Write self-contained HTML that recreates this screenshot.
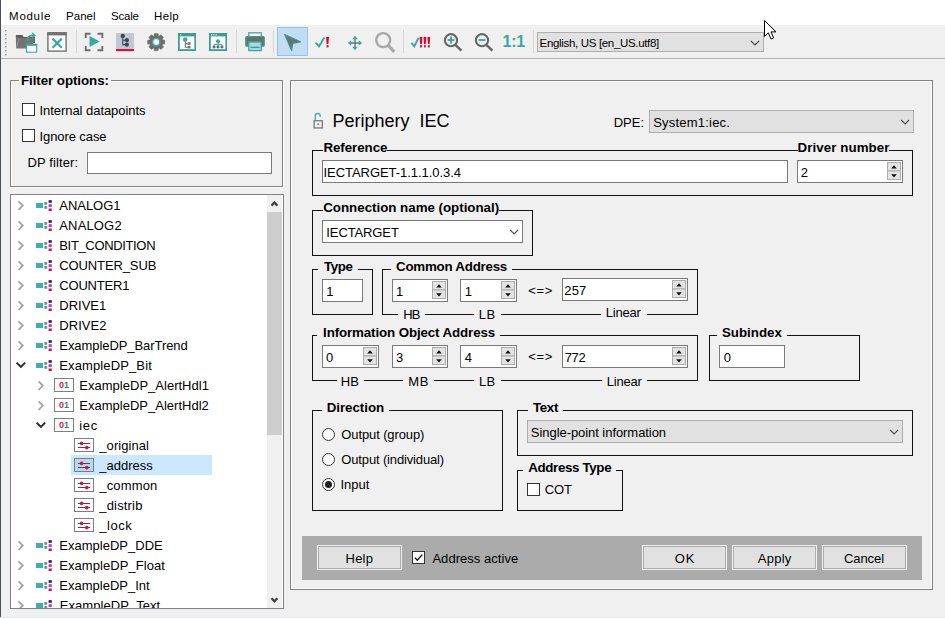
<!DOCTYPE html><html><head><meta charset="utf-8"><title>PARA</title><style>
*{box-sizing:border-box;margin:0;padding:0}
html,body{width:945px;height:618px;overflow:hidden;background:#f0f0f0}
body{position:relative;font-family:"Liberation Sans",Arial,sans-serif;font-size:13px;color:#000}
.a{position:absolute}
.t{position:absolute;white-space:nowrap;line-height:16px;height:16px}
.b{font-weight:bold}
.m{font-size:11.5px}
.gb{position:absolute;border:1px solid #111}
.gt{position:absolute;white-space:nowrap;line-height:16px;height:16px;font-weight:bold;font-size:13.33px;background:#f0f0f0}
.gl{position:absolute;white-space:nowrap;line-height:14px;height:14px;background:#f0f0f0}
.in{position:absolute;background:#fff;border:1px solid #7a7a7a}
.cb{position:absolute;width:13px;height:13px;background:#fff;border:1px solid #333}
.rb{position:absolute;width:13px;height:13px;background:#fff;border:1px solid #333;border-radius:50%}
.btn{position:absolute;background:#e1e1e1;border:1px solid #f0f0f0;box-shadow:inset 0 0 0 1px #adadad;text-align:center;line-height:23px;padding-top:1px}
.sb{position:absolute;width:14px;height:9px;background:#e9e9e9;border:1px solid #c4c4c4}
.row{position:absolute;white-space:nowrap;line-height:20px;height:20px;padding-top:1px}
</style></head><body><div class="a" style="left:0;top:0;width:945px;height:25px;background:#fff"></div><div id="t1" class="t m" style="left:9.10px;top:7.5px;letter-spacing:0.720px;">Module</div><div id="t2" class="t m" style="left:66.10px;top:7.5px;">Panel</div><div id="t3" class="t m" style="left:111.10px;top:7.5px;letter-spacing:-0.225px;">Scale</div><div id="t4" class="t m" style="left:154.10px;top:7.5px;letter-spacing:0.300px;">Help</div><div class="a" style="left:0;top:25px;width:945px;height:33px;background:#f0f0f0"></div><div class="a" style="left:0;top:58px;width:945px;height:1px;background:#b4b4b4"></div><svg class="a" style="left:5px;top:29.5px" width="3" height="28" viewBox="0 0 3 28"><rect x="0" y="0" width="1.5" height="1.5" fill="#9a9a9a"/><rect x="0" y="4" width="1.5" height="1.5" fill="#9a9a9a"/><rect x="0" y="8" width="1.5" height="1.5" fill="#9a9a9a"/><rect x="0" y="12" width="1.5" height="1.5" fill="#9a9a9a"/><rect x="0" y="16" width="1.5" height="1.5" fill="#9a9a9a"/><rect x="0" y="20" width="1.5" height="1.5" fill="#9a9a9a"/><rect x="0" y="24" width="1.5" height="1.5" fill="#9a9a9a"/></svg><svg class="a" style="left:14px;top:31px" width="26" height="24" viewBox="0 0 26 24"><path d="M1.8 4.1 H8.4 L9.6 6 H21 V12 H2.6 Z" fill="#5e5e5e"/><path d="M2.2 17.4 L1.8 5 L4.4 6.9 H21.2 L17.6 17.4 Z" fill="#747474"/><path d="M2.6 16.6 L4.9 7.6" stroke="#9a9a9a" stroke-width="0.7"/><path d="M13.8 10.2 V8.2 a3.6 3.6 0 0 1 3.6 -3.6 H19" fill="none" stroke="#3aa9a2" stroke-width="1.9"/><path d="M18.2 1.3 L22 4.5 L18.2 7.7 Z" fill="#3aa9a2"/><rect x="12.5" y="13.4" width="10.2" height="7.8" fill="#fff" stroke="#3aa9a2" stroke-width="1.1"/><rect x="12" y="12.9" width="11.2" height="2" fill="#3aa9a2"/></svg><svg class="a" style="left:47px;top:32px" width="20" height="20" viewBox="0 0 20 20"><rect x="0.9" y="0.9" width="18.2" height="18.2" fill="#fff" stroke="#727272" stroke-width="1.4"/><rect x="0.2" y="0.2" width="19.6" height="3.2" fill="#727272"/><path d="M5.6 6.6 L14.8 15.8 M14.8 6.6 L5.6 15.8" stroke="#3aa9a2" stroke-width="2.2"/></svg><div class="a" style="left:76px;top:30px;width:1px;height:23px;background:#d6d6d6"></div><svg class="a" style="left:84px;top:32px" width="20" height="20" viewBox="0 0 20 20"><path d="M1.7 6 V1.7 H6.5 M13.5 1.7 H18.3 V6 M18.3 14 V18.3 H13.5 M6.5 18.3 H1.7 V14" fill="none" stroke="#6e6e6e" stroke-width="1.9"/><path d="M5.5 4 L15.7 9.6 L5.5 15 Z" fill="#3aa9a2"/></svg><svg class="a" style="left:116px;top:33px" width="18" height="19" viewBox="0 0 18 19"><rect x="0" y="0" width="18" height="16" fill="#bfc9d3"/><rect x="0" y="16" width="18" height="2.2" fill="#d6104a"/><path d="M6.8 3 V11.6 H10.8 M6.8 7.2 H10.8" fill="none" stroke="#3d4756" stroke-width="1.1"/><circle cx="6.8" cy="2.9" r="2.2" fill="#3d4756"/><circle cx="10.9" cy="7.2" r="2.1" fill="#3d4756"/><circle cx="10.9" cy="11.7" r="2.1" fill="#3d4756"/></svg><svg class="a" style="left:146px;top:32px" width="20" height="20" viewBox="0 0 20 20"><g transform="translate(10.2,10.1) scale(0.93)"><path d="M-2.5 -6 L-1.9 -9.2 H1.9 L2.5 -6 Z" fill="#6e6e6e" stroke="#6e6e6e" stroke-width="0.6" stroke-linejoin="round" transform="rotate(0)"/><path d="M-2.5 -6 L-1.9 -9.2 H1.9 L2.5 -6 Z" fill="#6e6e6e" stroke="#6e6e6e" stroke-width="0.6" stroke-linejoin="round" transform="rotate(45)"/><path d="M-2.5 -6 L-1.9 -9.2 H1.9 L2.5 -6 Z" fill="#6e6e6e" stroke="#6e6e6e" stroke-width="0.6" stroke-linejoin="round" transform="rotate(90)"/><path d="M-2.5 -6 L-1.9 -9.2 H1.9 L2.5 -6 Z" fill="#6e6e6e" stroke="#6e6e6e" stroke-width="0.6" stroke-linejoin="round" transform="rotate(135)"/><path d="M-2.5 -6 L-1.9 -9.2 H1.9 L2.5 -6 Z" fill="#6e6e6e" stroke="#6e6e6e" stroke-width="0.6" stroke-linejoin="round" transform="rotate(180)"/><path d="M-2.5 -6 L-1.9 -9.2 H1.9 L2.5 -6 Z" fill="#6e6e6e" stroke="#6e6e6e" stroke-width="0.6" stroke-linejoin="round" transform="rotate(225)"/><path d="M-2.5 -6 L-1.9 -9.2 H1.9 L2.5 -6 Z" fill="#6e6e6e" stroke="#6e6e6e" stroke-width="0.6" stroke-linejoin="round" transform="rotate(270)"/><path d="M-2.5 -6 L-1.9 -9.2 H1.9 L2.5 -6 Z" fill="#6e6e6e" stroke="#6e6e6e" stroke-width="0.6" stroke-linejoin="round" transform="rotate(315)"/><circle r="7.1" fill="#6e6e6e"/><circle r="4.7" fill="#3aa9a2"/><circle r="3.2" fill="#dfeeee"/><circle r="2.3" fill="#fff"/></g></svg><svg class="a" style="left:178px;top:33px" width="18" height="18" viewBox="0 0 18 18"><rect x="0.9" y="0.9" width="16.4" height="16.2" fill="#fff" stroke="#3a9c96" stroke-width="1.8"/><rect x="0" y="0" width="18" height="3.4" fill="#3a9c96"/><rect x="2" y="1.2" width="1.2" height="1.2" fill="#fff"/><path d="M7.3 7 V14.2 H10.5 M7.3 10.6 H10.5" fill="none" stroke="#777" stroke-width="1.1"/><rect x="9.6" y="9.2" width="3" height="2.6" fill="#777"/><rect x="9.6" y="12.8" width="3" height="2.6" fill="#777"/><circle cx="7.2" cy="6.6" r="2.3" fill="#3aa9a2"/></svg><svg class="a" style="left:209px;top:33px" width="18" height="18" viewBox="0 0 18 18"><rect x="0.9" y="0.9" width="16.4" height="16.2" fill="#fff" stroke="#3a9c96" stroke-width="1.8"/><rect x="0" y="0" width="18" height="3.4" fill="#3a9c96"/><rect x="2" y="1.2" width="1.2" height="1.2" fill="#fff"/><rect x="4.3" y="1.2" width="1.2" height="1.2" fill="#fff"/><rect x="6.6" y="1.2" width="1.2" height="1.2" fill="#fff"/><path d="M9 9 V11.6 M5 13 V11.6 H13 V13 M9 11.6 V13" fill="none" stroke="#3aa9a2" stroke-width="1"/><circle cx="9" cy="8.2" r="2" fill="#3aa9a2"/><rect x="3.7" y="12.7" width="2.7" height="2.6" fill="#666"/><rect x="7.65" y="12.7" width="2.7" height="2.6" fill="#666"/><rect x="11.6" y="12.7" width="2.7" height="2.6" fill="#666"/></svg><div class="a" style="left:236px;top:30px;width:1px;height:23px;background:#d6d6d6"></div><svg class="a" style="left:245px;top:32px" width="20" height="20" viewBox="0 0 20 20"><rect x="3.8" y="0.8" width="12.4" height="5" fill="#fff" stroke="#3aa9a2" stroke-width="1.3"/><rect x="0.8" y="4.6" width="18.4" height="9.6" rx="1" fill="#6e6e6e" stroke="#3a9c96" stroke-width="1.3"/><rect x="3.8" y="10" width="12.4" height="8.6" fill="#a8dcd7" stroke="#3aa9a2" stroke-width="1.3"/><path d="M5.5 15.3 H14.5" stroke="#3a9c96" stroke-width="1.3"/></svg><div class="a" style="left:273px;top:30px;width:1px;height:23px;background:#d6d6d6"></div><div class="a" style="left:277px;top:27px;width:31px;height:29px;background:#c2dcf3;border:1px solid #90c3f0"></div><svg class="a" style="left:283px;top:33px" width="20" height="19" viewBox="0 0 20 19"><path d="M1.7 1.6 L17.6 8.8 L9.7 10.3 L8.6 17.6 Z" fill="#6e6e6e" stroke="#3a9c96" stroke-width="1.2" stroke-linejoin="round"/></svg><svg class="a" style="left:314px;top:36px" width="17" height="13" viewBox="0 0 17 13"><path d="M1.6 6.6 L5 10.4 L10.3 1.6" fill="none" stroke="#3aa9a2" stroke-width="2"/><path d="M12 1 H15 L14.4 8 H12.6 Z" fill="#e2062c"/><rect x="12.5" y="9.2" width="2.1" height="2.2" fill="#e2062c"/></svg><svg class="a" style="left:347px;top:35px" width="16" height="16" viewBox="0 0 16 16"><path d="M8 3.5 V12.5 M3.5 8 H12.5" stroke="#707070" stroke-width="1.4"/><path d="M8 0.8 L10.8 4.2 H5.2 Z M8 15.2 L10.8 11.8 H5.2 Z M0.8 8 L4.2 5.2 V10.8 Z M15.2 8 L11.8 5.2 V10.8 Z" fill="#3aa9a2"/></svg><svg class="a" style="left:373px;top:29.8px" width="24" height="24" viewBox="0 0 24 24"><circle cx="10.2" cy="10.1" r="7" fill="none" stroke="#a9a9a9" stroke-width="2.4"/><path d="M15 15.2 L21.2 21.8" stroke="#a9a9a9" stroke-width="3.2" stroke-linecap="butt"/></svg><div class="a" style="left:403px;top:30px;width:1px;height:23px;background:#d6d6d6"></div><svg class="a" style="left:410.4px;top:36px" width="22" height="13" viewBox="0 0 22 13"><path d="M1.4 6.8 L4.3 10.2 L8.6 1.8" fill="none" stroke="#3aa9a2" stroke-width="1.9"/><path d="M9.6 1 H12.4 L11.9 8 H10.1 Z" fill="#e2062c"/><rect x="10.0" y="9.2" width="2" height="2.2" fill="#e2062c"/><path d="M13.5 1 H16.3 L15.8 8 H14.0 Z" fill="#e2062c"/><rect x="13.9" y="9.2" width="2" height="2.2" fill="#e2062c"/><path d="M17.4 1 H20.2 L19.7 8 H17.9 Z" fill="#e2062c"/><rect x="17.8" y="9.2" width="2" height="2.2" fill="#e2062c"/></svg><svg class="a" style="left:442px;top:31px" width="22" height="22" viewBox="0 0 22 22"><circle cx="9" cy="9.2" r="6.1" fill="none" stroke="#666" stroke-width="2.1"/><path d="M13.4 13.8 L19.4 19.6" stroke="#666" stroke-width="2.4"/><path d="M9 5.6 V12.4 M5.6 9 H12.4" stroke="#3aa9a2" stroke-width="1.9"/></svg><svg class="a" style="left:473px;top:31px" width="22" height="22" viewBox="0 0 22 22"><circle cx="9" cy="9.2" r="6.1" fill="none" stroke="#666" stroke-width="2.1"/><path d="M13.4 13.8 L19.4 19.6" stroke="#666" stroke-width="2.4"/><path d="M5.6 9 H12.4" stroke="#3aa9a2" stroke-width="1.9"/></svg><div id="oneone" class="t b" style="left:502.6px;top:32.5px;font-size:16px;line-height:18px;height:18px;color:#3aa9a2;letter-spacing:-0.25px">1:1</div><div class="a" style="left:533px;top:30px;width:1px;height:23px;background:#d6d6d6"></div><div class="a" style="left:537px;top:32px;width:227px;height:20px;background:#e1e1e1;border:1px solid #adadad"></div><div id="t9" class="t" style="left:539.62px;top:35px;letter-spacing:-0.331px;font-size:11.5px;">English, US [en_US.utf8]</div><svg class="a" style="left:750px;top:40px" width="10" height="6" viewBox="0 0 10 6"><path d="M0.8 0.8 L5 5 L9.2 0.8" fill="none" stroke="#444" stroke-width="1.1"/></svg><div class="a" style="left:0;top:0;width:1px;height:618px;background:#4a5058"></div><div class="a" style="left:11px;top:81px;width:273px;height:107px;border:1px solid #fff"></div><div class="a" style="left:10px;top:80px;width:273px;height:107px;border:1px solid #828282"></div><div id="t5" class="gt" style="left:19.00px;top:73px;letter-spacing:-0.065px;padding:0 2px 0 2px;">Filter options:</div><div class="cb" style="left:22px;top:103px"></div><div id="t6" class="t" style="left:39.50px;top:102.5px;letter-spacing:-0.050px;">Internal datapoints</div><div class="cb" style="left:22px;top:129px"></div><div id="t7" class="t" style="left:39.50px;top:128.5px;letter-spacing:-0.090px;">Ignore case</div><div id="t8" class="t" style="left:27.60px;top:155px;letter-spacing:0.100px;">DP filter:</div><div class="in" style="left:87px;top:152px;width:185px;height:22px"></div><div class="a" style="left:10px;top:194px;width:274px;height:415px;background:#fff;border:1px solid #808284;overflow:hidden"><div class="a" style="left:-11px;top:-195px;width:300px;height:700px"><svg class="a" style="left:16px;top:195px" width="10" height="20" viewBox="0 0 10 20"><path d="M2.6 6.4 L6.8 10.6 L2.6 14.8" fill="none" stroke="#a4a4a4" stroke-width="1.8"/></svg><svg class="a" style="left:36px;top:195px" width="17" height="20" viewBox="0 0 17 20"><rect x="0" y="8" width="7" height="5" fill="#3fb0a9"/><rect x="8.4" y="7" width="2.8" height="2.8" fill="#8a8a8a"/><rect x="8.4" y="11" width="2.8" height="2.8" fill="#3fa39c"/><rect x="12.6" y="5.2" width="3.2" height="2.6" fill="#3b1058"/><rect x="12.6" y="9.2" width="3.2" height="2.8" fill="#b23fd0"/><rect x="12.6" y="13.5" width="3.2" height="2.5" fill="#e0103c"/></svg><div id="t10" class="row" style="left:59.30px;top:195px;letter-spacing:-0.045px;">ANALOG1</div><svg class="a" style="left:16px;top:215px" width="10" height="20" viewBox="0 0 10 20"><path d="M2.6 6.4 L6.8 10.6 L2.6 14.8" fill="none" stroke="#a4a4a4" stroke-width="1.8"/></svg><svg class="a" style="left:36px;top:215px" width="17" height="20" viewBox="0 0 17 20"><rect x="0" y="8" width="7" height="5" fill="#3fb0a9"/><rect x="8.4" y="7" width="2.8" height="2.8" fill="#8a8a8a"/><rect x="8.4" y="11" width="2.8" height="2.8" fill="#3fa39c"/><rect x="12.6" y="5.2" width="3.2" height="2.6" fill="#3b1058"/><rect x="12.6" y="9.2" width="3.2" height="2.8" fill="#b23fd0"/><rect x="12.6" y="13.5" width="3.2" height="2.5" fill="#e0103c"/></svg><div id="t11" class="row" style="left:59.30px;top:215px;letter-spacing:0.150px;">ANALOG2</div><svg class="a" style="left:16px;top:235px" width="10" height="20" viewBox="0 0 10 20"><path d="M2.6 6.4 L6.8 10.6 L2.6 14.8" fill="none" stroke="#a4a4a4" stroke-width="1.8"/></svg><svg class="a" style="left:36px;top:235px" width="17" height="20" viewBox="0 0 17 20"><rect x="0" y="8" width="7" height="5" fill="#3fb0a9"/><rect x="8.4" y="7" width="2.8" height="2.8" fill="#8a8a8a"/><rect x="8.4" y="11" width="2.8" height="2.8" fill="#3fa39c"/><rect x="12.6" y="5.2" width="3.2" height="2.6" fill="#3b1058"/><rect x="12.6" y="9.2" width="3.2" height="2.8" fill="#b23fd0"/><rect x="12.6" y="13.5" width="3.2" height="2.5" fill="#e0103c"/></svg><div id="t12" class="row" style="left:59.30px;top:235px;letter-spacing:-0.348px;">BIT_CONDITION</div><svg class="a" style="left:16px;top:255px" width="10" height="20" viewBox="0 0 10 20"><path d="M2.6 6.4 L6.8 10.6 L2.6 14.8" fill="none" stroke="#a4a4a4" stroke-width="1.8"/></svg><svg class="a" style="left:36px;top:255px" width="17" height="20" viewBox="0 0 17 20"><rect x="0" y="8" width="7" height="5" fill="#3fb0a9"/><rect x="8.4" y="7" width="2.8" height="2.8" fill="#8a8a8a"/><rect x="8.4" y="11" width="2.8" height="2.8" fill="#3fa39c"/><rect x="12.6" y="5.2" width="3.2" height="2.6" fill="#3b1058"/><rect x="12.6" y="9.2" width="3.2" height="2.8" fill="#b23fd0"/><rect x="12.6" y="13.5" width="3.2" height="2.5" fill="#e0103c"/></svg><div id="t13" class="row" style="left:59.30px;top:255px;letter-spacing:-0.119px;">COUNTER_SUB</div><svg class="a" style="left:16px;top:275px" width="10" height="20" viewBox="0 0 10 20"><path d="M2.6 6.4 L6.8 10.6 L2.6 14.8" fill="none" stroke="#a4a4a4" stroke-width="1.8"/></svg><svg class="a" style="left:36px;top:275px" width="17" height="20" viewBox="0 0 17 20"><rect x="0" y="8" width="7" height="5" fill="#3fb0a9"/><rect x="8.4" y="7" width="2.8" height="2.8" fill="#8a8a8a"/><rect x="8.4" y="11" width="2.8" height="2.8" fill="#3fa39c"/><rect x="12.6" y="5.2" width="3.2" height="2.6" fill="#3b1058"/><rect x="12.6" y="9.2" width="3.2" height="2.8" fill="#b23fd0"/><rect x="12.6" y="13.5" width="3.2" height="2.5" fill="#e0103c"/></svg><div id="t14" class="row" style="left:59.30px;top:275px;letter-spacing:-0.206px;">COUNTER1</div><svg class="a" style="left:16px;top:295px" width="10" height="20" viewBox="0 0 10 20"><path d="M2.6 6.4 L6.8 10.6 L2.6 14.8" fill="none" stroke="#a4a4a4" stroke-width="1.8"/></svg><svg class="a" style="left:36px;top:295px" width="17" height="20" viewBox="0 0 17 20"><rect x="0" y="8" width="7" height="5" fill="#3fb0a9"/><rect x="8.4" y="7" width="2.8" height="2.8" fill="#8a8a8a"/><rect x="8.4" y="11" width="2.8" height="2.8" fill="#3fa39c"/><rect x="12.6" y="5.2" width="3.2" height="2.6" fill="#3b1058"/><rect x="12.6" y="9.2" width="3.2" height="2.8" fill="#b23fd0"/><rect x="12.6" y="13.5" width="3.2" height="2.5" fill="#e0103c"/></svg><div id="t15" class="row" style="left:59.30px;top:295px;">DRIVE1</div><svg class="a" style="left:16px;top:315px" width="10" height="20" viewBox="0 0 10 20"><path d="M2.6 6.4 L6.8 10.6 L2.6 14.8" fill="none" stroke="#a4a4a4" stroke-width="1.8"/></svg><svg class="a" style="left:36px;top:315px" width="17" height="20" viewBox="0 0 17 20"><rect x="0" y="8" width="7" height="5" fill="#3fb0a9"/><rect x="8.4" y="7" width="2.8" height="2.8" fill="#8a8a8a"/><rect x="8.4" y="11" width="2.8" height="2.8" fill="#3fa39c"/><rect x="12.6" y="5.2" width="3.2" height="2.6" fill="#3b1058"/><rect x="12.6" y="9.2" width="3.2" height="2.8" fill="#b23fd0"/><rect x="12.6" y="13.5" width="3.2" height="2.5" fill="#e0103c"/></svg><div id="t16" class="row" style="left:59.30px;top:315px;letter-spacing:0.055px;">DRIVE2</div><svg class="a" style="left:16px;top:335px" width="10" height="20" viewBox="0 0 10 20"><path d="M2.6 6.4 L6.8 10.6 L2.6 14.8" fill="none" stroke="#a4a4a4" stroke-width="1.8"/></svg><svg class="a" style="left:36px;top:335px" width="17" height="20" viewBox="0 0 17 20"><rect x="0" y="8" width="7" height="5" fill="#3fb0a9"/><rect x="8.4" y="7" width="2.8" height="2.8" fill="#8a8a8a"/><rect x="8.4" y="11" width="2.8" height="2.8" fill="#3fa39c"/><rect x="12.6" y="5.2" width="3.2" height="2.6" fill="#3b1058"/><rect x="12.6" y="9.2" width="3.2" height="2.8" fill="#b23fd0"/><rect x="12.6" y="13.5" width="3.2" height="2.5" fill="#e0103c"/></svg><div id="t17" class="row" style="left:59.30px;top:335px;letter-spacing:-0.069px;">ExampleDP_BarTrend</div><svg class="a" style="left:15px;top:355px" width="12" height="20" viewBox="0 0 12 20"><path d="M1.6 7.6 L5.9 11.9 L10.2 7.6" fill="none" stroke="#2c2c2c" stroke-width="2"/></svg><svg class="a" style="left:36px;top:355px" width="17" height="20" viewBox="0 0 17 20"><rect x="0" y="8" width="7" height="5" fill="#3fb0a9"/><rect x="8.4" y="7" width="2.8" height="2.8" fill="#8a8a8a"/><rect x="8.4" y="11" width="2.8" height="2.8" fill="#3fa39c"/><rect x="12.6" y="5.2" width="3.2" height="2.6" fill="#3b1058"/><rect x="12.6" y="9.2" width="3.2" height="2.8" fill="#b23fd0"/><rect x="12.6" y="13.5" width="3.2" height="2.5" fill="#e0103c"/></svg><div id="t18" class="row" style="left:59.30px;top:355px;letter-spacing:0.120px;">ExampleDP_Bit</div><svg class="a" style="left:36px;top:375px" width="10" height="20" viewBox="0 0 10 20"><path d="M2.6 6.4 L6.8 10.6 L2.6 14.8" fill="none" stroke="#a4a4a4" stroke-width="1.8"/></svg><div class="a" style="left:54px;top:378px;width:20px;height:14px;border:1px solid #808080;background:#fff"></div><div class="a b" style="left:59px;top:379px;font-size:9px;line-height:12px;height:12px;letter-spacing:0px;white-space:nowrap"><span style="color:#cf1d57">0</span><span style="color:#258a82">1</span></div><div id="t19" class="row" style="left:79.30px;top:375px;letter-spacing:0.015px;">ExampleDP_AlertHdl1</div><svg class="a" style="left:36px;top:395px" width="10" height="20" viewBox="0 0 10 20"><path d="M2.6 6.4 L6.8 10.6 L2.6 14.8" fill="none" stroke="#a4a4a4" stroke-width="1.8"/></svg><div class="a" style="left:54px;top:398px;width:20px;height:14px;border:1px solid #808080;background:#fff"></div><div class="a b" style="left:59px;top:399px;font-size:9px;line-height:12px;height:12px;letter-spacing:0px;white-space:nowrap"><span style="color:#cf1d57">0</span><span style="color:#258a82">1</span></div><div id="t20" class="row" style="left:79.30px;top:395px;letter-spacing:0.010px;">ExampleDP_AlertHdl2</div><svg class="a" style="left:35px;top:415px" width="12" height="20" viewBox="0 0 12 20"><path d="M1.6 7.6 L5.9 11.9 L10.2 7.6" fill="none" stroke="#2c2c2c" stroke-width="2"/></svg><div class="a" style="left:54px;top:418px;width:20px;height:14px;border:1px solid #808080;background:#fff"></div><div class="a b" style="left:59px;top:419px;font-size:9px;line-height:12px;height:12px;letter-spacing:0px;white-space:nowrap"><span style="color:#cf1d57">0</span><span style="color:#258a82">1</span></div><div id="t21" class="row" style="left:79.30px;top:415px;letter-spacing:0.684px;">iec</div><svg class="a" style="left:74px;top:438px" width="20" height="14" viewBox="0 0 20 14"><rect x="0.5" y="0.5" width="19" height="13" fill="#fff" stroke="#7d7d7d"/><path d="M4 5.5 H16 M4 9.5 H16" stroke="#4a4a4a" stroke-width="1"/><circle cx="7.6" cy="5.3" r="1.9" fill="#dc1040"/><circle cx="12.8" cy="9.6" r="1.9" fill="#dc1040"/></svg><div id="t22" class="row" style="left:99.30px;top:435px;letter-spacing:0.070px;">_original</div><div class="a" style="left:71px;top:455px;width:141px;height:20px;background:#cce8ff"></div><svg class="a" style="left:74px;top:458px" width="20" height="14" viewBox="0 0 20 14"><rect x="0.5" y="0.5" width="19" height="13" fill="#b8d8f4" stroke="#7d7d7d"/><path d="M4 5.5 H16 M4 9.5 H16" stroke="#4a4a4a" stroke-width="1"/><circle cx="7.6" cy="5.3" r="1.9" fill="#dc1040"/><circle cx="12.8" cy="9.6" r="1.9" fill="#dc1040"/></svg><div id="t23" class="row" style="left:99.30px;top:455px;letter-spacing:-0.014px;">_address</div><svg class="a" style="left:74px;top:478px" width="20" height="14" viewBox="0 0 20 14"><rect x="0.5" y="0.5" width="19" height="13" fill="#fff" stroke="#7d7d7d"/><path d="M4 5.5 H16 M4 9.5 H16" stroke="#4a4a4a" stroke-width="1"/><circle cx="7.6" cy="5.3" r="1.9" fill="#dc1040"/><circle cx="12.8" cy="9.6" r="1.9" fill="#dc1040"/></svg><div id="t24" class="row" style="left:99.30px;top:475px;letter-spacing:0.159px;">_common</div><svg class="a" style="left:74px;top:498px" width="20" height="14" viewBox="0 0 20 14"><rect x="0.5" y="0.5" width="19" height="13" fill="#fff" stroke="#7d7d7d"/><path d="M4 5.5 H16 M4 9.5 H16" stroke="#4a4a4a" stroke-width="1"/><circle cx="7.6" cy="5.3" r="1.9" fill="#dc1040"/><circle cx="12.8" cy="9.6" r="1.9" fill="#dc1040"/></svg><div id="t25" class="row" style="left:99.30px;top:495px;letter-spacing:0.172px;">_distrib</div><svg class="a" style="left:74px;top:518px" width="20" height="14" viewBox="0 0 20 14"><rect x="0.5" y="0.5" width="19" height="13" fill="#fff" stroke="#7d7d7d"/><path d="M4 5.5 H16 M4 9.5 H16" stroke="#4a4a4a" stroke-width="1"/><circle cx="7.6" cy="5.3" r="1.9" fill="#dc1040"/><circle cx="12.8" cy="9.6" r="1.9" fill="#dc1040"/></svg><div id="t26" class="row" style="left:99.30px;top:515px;letter-spacing:0.510px;">_lock</div><svg class="a" style="left:16px;top:535px" width="10" height="20" viewBox="0 0 10 20"><path d="M2.6 6.4 L6.8 10.6 L2.6 14.8" fill="none" stroke="#a4a4a4" stroke-width="1.8"/></svg><svg class="a" style="left:36px;top:535px" width="17" height="20" viewBox="0 0 17 20"><rect x="0" y="8" width="7" height="5" fill="#3fb0a9"/><rect x="8.4" y="7" width="2.8" height="2.8" fill="#8a8a8a"/><rect x="8.4" y="11" width="2.8" height="2.8" fill="#3fa39c"/><rect x="12.6" y="5.2" width="3.2" height="2.6" fill="#3b1058"/><rect x="12.6" y="9.2" width="3.2" height="2.8" fill="#b23fd0"/><rect x="12.6" y="13.5" width="3.2" height="2.5" fill="#e0103c"/></svg><div id="t27" class="row" style="left:59.30px;top:535px;letter-spacing:0.011px;">ExampleDP_DDE</div><svg class="a" style="left:16px;top:555px" width="10" height="20" viewBox="0 0 10 20"><path d="M2.6 6.4 L6.8 10.6 L2.6 14.8" fill="none" stroke="#a4a4a4" stroke-width="1.8"/></svg><svg class="a" style="left:36px;top:555px" width="17" height="20" viewBox="0 0 17 20"><rect x="0" y="8" width="7" height="5" fill="#3fb0a9"/><rect x="8.4" y="7" width="2.8" height="2.8" fill="#8a8a8a"/><rect x="8.4" y="11" width="2.8" height="2.8" fill="#3fa39c"/><rect x="12.6" y="5.2" width="3.2" height="2.6" fill="#3b1058"/><rect x="12.6" y="9.2" width="3.2" height="2.8" fill="#b23fd0"/><rect x="12.6" y="13.5" width="3.2" height="2.5" fill="#e0103c"/></svg><div id="t28" class="row" style="left:59.30px;top:555px;letter-spacing:0.054px;">ExampleDP_Float</div><svg class="a" style="left:16px;top:575px" width="10" height="20" viewBox="0 0 10 20"><path d="M2.6 6.4 L6.8 10.6 L2.6 14.8" fill="none" stroke="#a4a4a4" stroke-width="1.8"/></svg><svg class="a" style="left:36px;top:575px" width="17" height="20" viewBox="0 0 17 20"><rect x="0" y="8" width="7" height="5" fill="#3fb0a9"/><rect x="8.4" y="7" width="2.8" height="2.8" fill="#8a8a8a"/><rect x="8.4" y="11" width="2.8" height="2.8" fill="#3fa39c"/><rect x="12.6" y="5.2" width="3.2" height="2.6" fill="#3b1058"/><rect x="12.6" y="9.2" width="3.2" height="2.8" fill="#b23fd0"/><rect x="12.6" y="13.5" width="3.2" height="2.5" fill="#e0103c"/></svg><div id="t29" class="row" style="left:59.30px;top:575px;letter-spacing:0.003px;">ExampleDP_Int</div><svg class="a" style="left:16px;top:595px" width="10" height="20" viewBox="0 0 10 20"><path d="M2.6 6.4 L6.8 10.6 L2.6 14.8" fill="none" stroke="#a4a4a4" stroke-width="1.8"/></svg><svg class="a" style="left:36px;top:595px" width="17" height="20" viewBox="0 0 17 20"><rect x="0" y="8" width="7" height="5" fill="#3fb0a9"/><rect x="8.4" y="7" width="2.8" height="2.8" fill="#8a8a8a"/><rect x="8.4" y="11" width="2.8" height="2.8" fill="#3fa39c"/><rect x="12.6" y="5.2" width="3.2" height="2.6" fill="#3b1058"/><rect x="12.6" y="9.2" width="3.2" height="2.8" fill="#b23fd0"/><rect x="12.6" y="13.5" width="3.2" height="2.5" fill="#e0103c"/></svg><div id="t30" class="row" style="left:59.66px;top:595px;letter-spacing:0.066px;">ExampleDP_Text</div><div class="a" style="left:267px;top:195px;width:15px;height:413px;background:#f0f0f0"></div><div class="a" style="left:267px;top:212px;width:15px;height:223px;background:#cdcdcd"></div><svg class="a" style="left:267px;top:194px" width="15" height="18" viewBox="0 0 15 18"><path d="M4.5 11.6 L7.45 8.4 L10.4 11.6" fill="none" stroke="#404040" stroke-width="2.3"/></svg><svg class="a" style="left:267px;top:590px" width="15" height="18" viewBox="0 0 15 18"><path d="M4.5 8.2 L7.45 11.4 L10.4 8.2" fill="none" stroke="#404040" stroke-width="2.3"/></svg></div></div><div class="a" style="left:291px;top:81px;width:641px;height:508px;border:1px solid #fff"></div><div class="a" style="left:290px;top:80px;width:643px;height:510px;border:1px solid #828282"></div><div class="a" style="left:0;top:617px;width:945px;height:1px;background:#dcebf4"></div><svg class="a" style="left:312px;top:111px" width="13" height="19" viewBox="0 0 13 19"><path d="M3.3 9.4 V4.9 a2.45 2.45 0 0 1 4.9 0 V6" fill="none" stroke="#45b3a6" stroke-width="1.4"/><rect x="2.15" y="9.75" width="8.2" height="7.2" fill="none" stroke="#7a7a7a" stroke-width="1.3"/><circle cx="6.25" cy="13.2" r="1.05" fill="#3fa9a0"/></svg><div id="t31" class="t" style="left:332.57px;top:110px;letter-spacing:-0.013px;font-size:18px;line-height:22px;height:22px;white-space:pre;">Periphery  IEC</div><div id="t32" class="t" style="left:613.63px;top:114.5px;letter-spacing:0.057px;">DPE:</div><div class="a" style="left:649px;top:110px;width:265px;height:23px;background:#e1e1e1;border:1px solid #adadad"></div><div id="t33" class="t" style="left:653.18px;top:115.0px;letter-spacing:0.211px;">System1:iec.</div><svg class="a" style="left:899.5px;top:118.5px" width="11" height="7" viewBox="0 0 11 7"><path d="M1.2 1 L5.1 4.9 L9 1" fill="none" stroke="#505050" stroke-width="1.15"/></svg><div class="gb" style="left:312px;top:150px;width:601px;height:46px"></div><div id="t34" class="gt" style="left:323.43px;top:140.0px;letter-spacing:-0.049px;padding:0 0px 0 0px;">Reference</div><div id="t35" class="gt" style="left:797.59px;top:140.0px;letter-spacing:0.060px;padding:0 0px 0 0px;">Driver number</div><div class="in" style="left:322px;top:160px;width:466px;height:23px"></div><div id="t36" class="t" style="left:323.46px;top:165.0px;letter-spacing:-0.045px;">IECTARGET-1.1.1.0.3.4</div><div class="in" style="left:797px;top:160px;width:106px;height:23px"></div><div id="t37" class="t" style="left:800.63px;top:165.0px;letter-spacing:-0.021px;">2</div><svg class="a" style="left:887px;top:161px" width="15" height="21" viewBox="0 0 15 21"><rect x="0.5" y="1.5" width="13" height="8.5" fill="#e3e3e3" stroke="#acacac"/><rect x="0.5" y="10" width="13" height="8.5" fill="#e3e3e3" stroke="#acacac"/><path d="M4.2 7.4 L7 4.2 L9.8 7.4 Z M4.2 13.2 L7 16.4 L9.8 13.2 Z" fill="#111"/></svg><div class="gb" style="left:312px;top:210px;width:221px;height:46px"></div><div id="t38" class="gt" style="left:323.25px;top:200.0px;letter-spacing:-0.013px;padding:0 0px 0 0px;">Connection name (optional)</div><div class="a" style="left:322px;top:220px;width:201px;height:23px;background:#fff;border:1px solid #7a7a7a"></div><div id="t39" class="t" style="left:326.32px;top:225.0px;letter-spacing:-0.109px;">IECTARGET</div><svg class="a" style="left:508.5px;top:228.5px" width="11" height="7" viewBox="0 0 11 7"><path d="M1.2 1 L5.1 4.9 L9 1" fill="none" stroke="#505050" stroke-width="1.15"/></svg><div class="gb" style="left:312px;top:269px;width:61px;height:46px"></div><div id="t40" class="gt" style="left:318.00px;top:259.0px;letter-spacing:-0.420px;padding:0 6px 0 6px;">Type</div><div class="in" style="left:322px;top:279px;width:41px;height:23px"></div><div id="t41" class="t" style="left:326.36px;top:284.0px;letter-spacing:-0.249px;">1</div><div class="gb" style="left:382px;top:269px;width:316px;height:46px"></div><div id="t42" class="gt" style="left:391.04px;top:259.0px;letter-spacing:-0.235px;padding:0 5px 0 5px;">Common Address</div><div class="in" style="left:392px;top:279px;width:56px;height:23px"></div><div id="t43" class="t" style="left:396.00px;top:284.0px;">1</div><svg class="a" style="left:432px;top:280px" width="15" height="21" viewBox="0 0 15 21"><rect x="0.5" y="1.5" width="13" height="8.5" fill="#e3e3e3" stroke="#acacac"/><rect x="0.5" y="10" width="13" height="8.5" fill="#e3e3e3" stroke="#acacac"/><path d="M4.2 7.4 L7 4.2 L9.8 7.4 Z M4.2 13.2 L7 16.4 L9.8 13.2 Z" fill="#111"/></svg><div class="in" style="left:460px;top:279px;width:57px;height:23px"></div><div id="t44" class="t" style="left:464.72px;top:284.0px;letter-spacing:0.450px;">1</div><svg class="a" style="left:501px;top:280px" width="15" height="21" viewBox="0 0 15 21"><rect x="0.5" y="1.5" width="13" height="8.5" fill="#e3e3e3" stroke="#acacac"/><rect x="0.5" y="10" width="13" height="8.5" fill="#e3e3e3" stroke="#acacac"/><path d="M4.2 7.4 L7 4.2 L9.8 7.4 Z M4.2 13.2 L7 16.4 L9.8 13.2 Z" fill="#111"/></svg><div id="t45" class="t" style="left:528.18px;top:282.5px;letter-spacing:0.675px;">&lt;=&gt;</div><div class="in" style="left:562px;top:278px;width:126px;height:23px"></div><div id="t46" class="t" style="left:564.20px;top:283.0px;letter-spacing:0.225px;">257</div><svg class="a" style="left:672px;top:279px" width="15" height="21" viewBox="0 0 15 21"><rect x="0.5" y="1.5" width="13" height="8.5" fill="#e3e3e3" stroke="#acacac"/><rect x="0.5" y="10" width="13" height="8.5" fill="#e3e3e3" stroke="#acacac"/><path d="M4.2 7.4 L7 4.2 L9.8 7.4 Z M4.2 13.2 L7 16.4 L9.8 13.2 Z" fill="#111"/></svg><div id="t47" class="gl" style="left:398.16px;top:307.5px;letter-spacing:-0.720px;padding:0 5px 0 5px;">HB</div><div id="t48" class="gl" style="left:473.72px;top:307.5px;letter-spacing:0.558px;padding:0 5px 0 5px;">LB</div><div id="t49" class="gl" style="left:600.77px;top:305.5px;letter-spacing:-0.237px;padding:0 7px 0 5px;">Linear</div><div class="gb" style="left:312px;top:335px;width:386px;height:46px"></div><div id="t50" class="gt" style="left:317.07px;top:325.0px;letter-spacing:-0.117px;padding:0 5px 0 6px;">Information Object Address</div><div class="in" style="left:322px;top:345px;width:57px;height:23px"></div><div id="t51" class="t" style="left:326.00px;top:350.0px;">0</div><svg class="a" style="left:363px;top:346px" width="15" height="21" viewBox="0 0 15 21"><rect x="0.5" y="1.5" width="13" height="8.5" fill="#e3e3e3" stroke="#acacac"/><rect x="0.5" y="10" width="13" height="8.5" fill="#e3e3e3" stroke="#acacac"/><path d="M4.2 7.4 L7 4.2 L9.8 7.4 Z M4.2 13.2 L7 16.4 L9.8 13.2 Z" fill="#111"/></svg><div class="in" style="left:392px;top:345px;width:56px;height:23px"></div><div id="t52" class="t" style="left:396.00px;top:350.0px;">3</div><svg class="a" style="left:432px;top:346px" width="15" height="21" viewBox="0 0 15 21"><rect x="0.5" y="1.5" width="13" height="8.5" fill="#e3e3e3" stroke="#acacac"/><rect x="0.5" y="10" width="13" height="8.5" fill="#e3e3e3" stroke="#acacac"/><path d="M4.2 7.4 L7 4.2 L9.8 7.4 Z M4.2 13.2 L7 16.4 L9.8 13.2 Z" fill="#111"/></svg><div class="in" style="left:460px;top:345px;width:57px;height:23px"></div><div id="t53" class="t" style="left:464.72px;top:350.0px;letter-spacing:0.450px;">4</div><svg class="a" style="left:501px;top:346px" width="15" height="21" viewBox="0 0 15 21"><rect x="0.5" y="1.5" width="13" height="8.5" fill="#e3e3e3" stroke="#acacac"/><rect x="0.5" y="10" width="13" height="8.5" fill="#e3e3e3" stroke="#acacac"/><path d="M4.2 7.4 L7 4.2 L9.8 7.4 Z M4.2 13.2 L7 16.4 L9.8 13.2 Z" fill="#111"/></svg><div id="t54" class="t" style="left:528.18px;top:348.5px;letter-spacing:0.675px;">&lt;=&gt;</div><div class="in" style="left:562px;top:345px;width:126px;height:23px"></div><div id="t55" class="t" style="left:564.65px;top:350.0px;letter-spacing:-0.315px;">772</div><svg class="a" style="left:672px;top:346px" width="15" height="21" viewBox="0 0 15 21"><rect x="0.5" y="1.5" width="13" height="8.5" fill="#e3e3e3" stroke="#acacac"/><rect x="0.5" y="10" width="13" height="8.5" fill="#e3e3e3" stroke="#acacac"/><path d="M4.2 7.4 L7 4.2 L9.8 7.4 Z M4.2 13.2 L7 16.4 L9.8 13.2 Z" fill="#111"/></svg><div id="t56" class="gl" style="left:336.85px;top:374.5px;letter-spacing:0.090px;padding:0 5px 0 4px;">HB</div><div id="t57" class="gl" style="left:403.18px;top:374.5px;letter-spacing:0.630px;padding:0 5px 0 5px;">MB</div><div id="t58" class="gl" style="left:473.90px;top:374.5px;letter-spacing:0.486px;padding:0 5px 0 5px;">LB</div><div id="t59" class="gl" style="left:601.86px;top:374.5px;letter-spacing:-0.216px;padding:0 5px 0 5px;">Linear</div><div class="gb" style="left:709px;top:335px;width:151px;height:46px"></div><div id="t60" class="gt" style="left:716.90px;top:325.0px;padding:0 5px 0 5px;">Subindex</div><div class="in" style="left:719px;top:345px;width:66px;height:23px"></div><div id="t61" class="t" style="left:723.78px;top:350.0px;letter-spacing:-0.164px;">0</div><div class="gb" style="left:312px;top:410px;width:191px;height:101px"></div><div id="t62" class="gt" style="left:321.68px;top:400.0px;letter-spacing:-0.034px;padding:0 5px 0 5px;">Direction</div><div class="rb" style="left:322px;top:428px"></div><div id="t63" class="t" style="left:341.30px;top:426.5px;letter-spacing:-0.112px;">Output (group)</div><div class="rb" style="left:322px;top:453px"></div><div id="t64" class="t" style="left:341.30px;top:451.5px;letter-spacing:-0.145px;">Output (individual)</div><div class="rb" style="left:322px;top:478px"></div><div class="a" style="left:325px;top:481px;width:7px;height:7px;border-radius:50%;background:#222"></div><div id="t65" class="t" style="left:340.40px;top:476.5px;letter-spacing:-0.015px;">Input</div><div class="gb" style="left:517px;top:410px;width:396px;height:46px"></div><div id="t66" class="gt" style="left:527.94px;top:400.0px;letter-spacing:-0.342px;padding:0 5px 0 5px;">Text</div><div class="a" style="left:527px;top:420px;width:376px;height:23px;background:#e1e1e1;border:1px solid #adadad"></div><div id="t67" class="t" style="left:530.86px;top:425.0px;letter-spacing:-0.058px;">Single-point information</div><svg class="a" style="left:888.5px;top:428.5px" width="11" height="7" viewBox="0 0 11 7"><path d="M1.2 1 L5.1 4.9 L9 1" fill="none" stroke="#505050" stroke-width="1.15"/></svg><div class="gb" style="left:517px;top:470px;width:106px;height:41px"></div><div id="t68" class="gt" style="left:523.17px;top:460.0px;letter-spacing:-0.340px;padding:0 5px 0 5px;">Address Type</div><div class="cb" style="left:527px;top:483px"></div><div id="t69" class="t" style="left:544.86px;top:482.0px;letter-spacing:-0.195px;">COT</div><div class="a" style="left:302px;top:536px;width:620px;height:44px;background:#ababab"></div><div class="btn" style="left:317px;top:545px;width:85px;height:25px"></div><div id="t70" class="t" style="left:345.55px;top:550.5px;letter-spacing:0.213px;">Help</div><div class="cb" style="left:412px;top:551px"></div><svg class="a" style="left:412px;top:551px" width="13" height="13" viewBox="0 0 13 13"><path d="M2.8 6.6 L5.3 9.2 L10.3 3.6" fill="none" stroke="#111" stroke-width="1.3"/></svg><div id="t71" class="t" style="left:432.41px;top:550.5px;letter-spacing:0.042px;">Address active</div><div class="btn" style="left:642px;top:545px;width:85px;height:25px"></div><div id="t72" class="t" style="left:674.82px;top:550.5px;letter-spacing:0.753px;">OK</div><div class="btn" style="left:732px;top:545px;width:85px;height:25px"></div><div id="t73" class="t" style="left:757.74px;top:550.5px;letter-spacing:0.261px;">Apply</div><div class="btn" style="left:822px;top:545px;width:85px;height:25px"></div><div id="t74" class="t" style="left:843.88px;top:550.5px;letter-spacing:-0.054px;">Cancel</div><svg class="a" style="left:763px;top:19px" width="14" height="22" viewBox="0 0 14 22"><path d="M1.5 1.5 V17.5 L5.3 13.8 L8 20 L10.6 18.9 L8 12.9 H13 Z" fill="#fff" stroke="#000" stroke-width="1" stroke-linejoin="miter"/></svg></body></html>
